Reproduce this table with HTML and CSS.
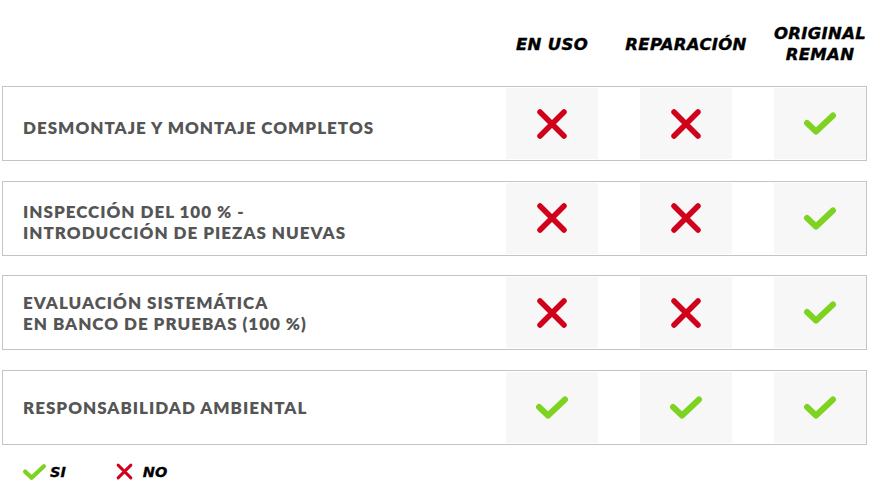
FILE: index.html
```html
<!DOCTYPE html>
<html lang="es">
<head>
<meta charset="utf-8">
<link rel="stylesheet" href="styles.css">
</head>
<body>
<svg width="0" height="0" class="defs">
  <symbol id="chk" viewBox="0 0 34 25"><path d="M4 12 L13 20.5 L30 4.5" fill="none" stroke="#7ed321" stroke-width="6" stroke-linecap="round" stroke-linejoin="round"/></symbol>
  <symbol id="crs" viewBox="0 0 32 32"><path d="M4 4 L28 28 M28 4 L4 28" fill="none" stroke="#d0021b" stroke-width="5.5" stroke-linecap="round"/></symbol>
</svg>
<div class="table">
  <div class="head">
    <div></div>
    <div class="hcell"><span>EN USO</span></div>
    <div class="hcell"><span>REPARACIÓN</span></div>
    <div class="hcell"><span>ORIGINAL<br>REMAN</span></div>
  </div>
  <div class="rows">
    <div class="row">
      <div class="label low">DESMONTAJE Y MONTAJE COMPLETOS</div>
      <div class="cell"><svg class="x"><use href="#crs"/></svg></div>
      <div class="cell"><svg class="x"><use href="#crs"/></svg></div>
      <div class="cell"><svg class="v"><use href="#chk"/></svg></div>
    </div>
    <div class="row">
      <div class="label low">INSPECCIÓN DEL 100 % -<br>INTRODUCCIÓN DE PIEZAS NUEVAS</div>
      <div class="cell"><svg class="x"><use href="#crs"/></svg></div>
      <div class="cell"><svg class="x"><use href="#crs"/></svg></div>
      <div class="cell"><svg class="v"><use href="#chk"/></svg></div>
    </div>
    <div class="row">
      <div class="label">EVALUACIÓN SISTEMÁTICA<br>EN BANCO DE PRUEBAS (100 %)</div>
      <div class="cell"><svg class="x"><use href="#crs"/></svg></div>
      <div class="cell"><svg class="x"><use href="#crs"/></svg></div>
      <div class="cell"><svg class="v"><use href="#chk"/></svg></div>
    </div>
    <div class="row">
      <div class="label">RESPONSABILIDAD AMBIENTAL</div>
      <div class="cell"><svg class="v"><use href="#chk"/></svg></div>
      <div class="cell"><svg class="v"><use href="#chk"/></svg></div>
      <div class="cell"><svg class="v"><use href="#chk"/></svg></div>
    </div>
  </div>
  <div class="legend">
    <div class="item"><svg class="lv"><use href="#chk"/></svg><span>SI</span></div>
    <div class="item"><svg class="lx"><use href="#crs"/></svg><span>NO</span></div>
  </div>
</div>
</body>
</html>
```
FILE: styles.css
```css
html, body { margin: 0; padding: 0; background: #fff; }
.defs { position: absolute; }
.table { margin: 0 8px 0 2px; }
.head, .row {
  display: grid;
  grid-template-columns: 1fr 92px 92px 92px;
  column-gap: 42px;
}
.head {
  height: 86px;
  align-items: center;
  padding: 0 1px;
}
.hcell {
  display: flex;
  justify-content: center;
  font-family: "DejaVu Sans", "Open Sans", sans-serif;
  font-weight: 700;
  font-style: italic;
  font-size: 16.5px;
  line-height: 21px;
  letter-spacing: 0.3px;
  text-align: center;
  color: #000;
  padding-top: 2px;
  white-space: nowrap;
  -webkit-text-stroke: 0.4px #000;
}
.hcell span { flex: none; }
.rows { display: flex; flex-direction: column; gap: 19.5px; }
.row {
  height: 75px;
  box-sizing: border-box;
  border: 1px solid #c4c4c4;
  padding: 1px 0;
}
.label {
  align-self: center;
  padding-left: 20px;
  font-family: Lato, "Open Sans", sans-serif;
  font-weight: 800;
  font-size: 17px;
  line-height: 21px;
  letter-spacing: 1px;
  color: #555;
}
.label.low { padding-top: 7px; }
.cell {
  background: #f7f7f7;
  display: flex;
  align-items: center;
  justify-content: center;
}
.v { width: 34px; height: 25px; }
.x { width: 32px; height: 32px; }
.legend {
  display: flex;
  align-items: center;
  gap: 50px;
  padding: 18px 0 0 20px;
}
.item { display: flex; align-items: center; gap: 3px; }
.item span {
  font-family: "DejaVu Sans", "Open Sans", sans-serif;
  font-weight: 700;
  font-style: italic;
  font-size: 14.5px;
  color: #000;
  -webkit-text-stroke: 0.3px #000;
}
.lv { width: 25px; height: 18px; }
.lx { width: 17px; height: 17px; margin-right: 7px; }
```
